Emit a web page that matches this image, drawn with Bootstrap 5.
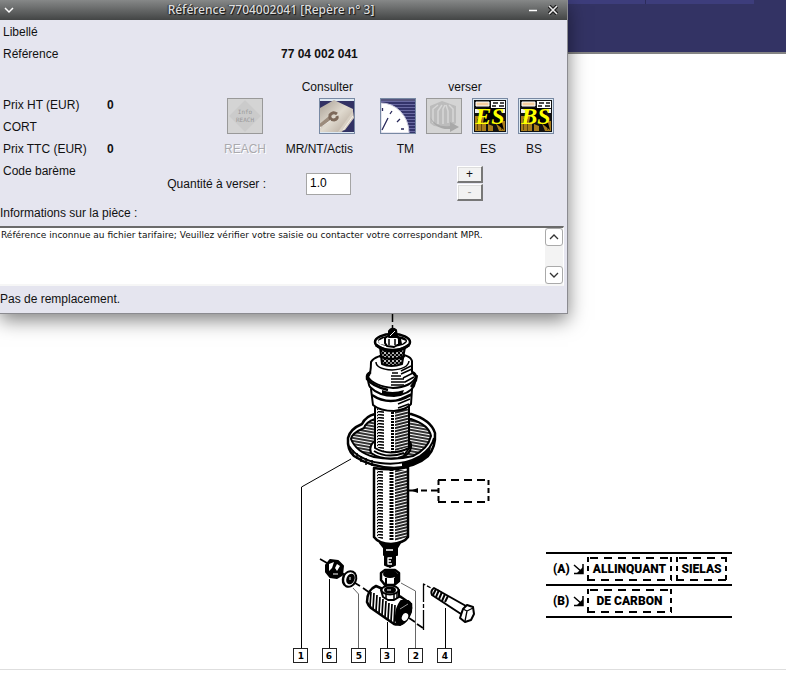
<!DOCTYPE html>
<html lang="fr">
<head>
<meta charset="utf-8">
<meta name="viewport" content="width=device-width, initial-scale=1">
<title>Référence 7704002041</title>
<link href="https://cdn.jsdelivr.net/npm/bootstrap@5.3.0/dist/css/bootstrap.min.css" rel="stylesheet">
<style>
body{font:12px/22px "Liberation Sans",Arial,sans-serif;color:#111;background:#fff}
.topbar{height:54px;background:#333364;border-bottom:2px solid #848484}
.tabstrip{height:4px;width:754px;max-width:100%;background:#3d3d7c}
.tabstrip span{width:646px;border-right:1px solid #2c2c5c}
.dialogwin{position:absolute;top:0;left:0;width:568px;max-width:100%;background:#e5e5ef;border-right:1px solid #8b8b90;border-bottom:1px solid #8b8b90;box-shadow:0 6px 18px rgba(0,0,0,.5)}
.titlebar{height:20px;background:linear-gradient(#868888,#434545);color:#ddd;font:500 12px/20px "Noto Sans",sans-serif;text-shadow:1px 1px 1px #111,-1px 0 1px #333;padding:0 8px 0 3px}
.titlebar button{width:12px;height:20px;border:0;background:none;padding:0;display:flex;align-items:center;justify-content:center}
.titlebar button svg{display:block}
.fields{padding:1px 0 0 3px}
.fields .lbl{width:104px}
.refvalue{margin-left:174px}
.prices{width:160px;padding:29px 0 0 3px}
.prices dt,.prices dd{font:inherit;margin:0}
.prices dd{font-weight:700}
.prices dt{width:104px}
.actions{display:grid;grid-template-columns:106px 89px 61px 46px 46px 46px;grid-template-rows:33px 36px 26px 41px;justify-items:end;padding-bottom:1px}
.actions>label,.actions>.head{align-self:end}
.actions .mid{grid-column:4 / span 2;justify-self:center;padding-left:6px}
.icobtn{width:36px;height:36px;padding:0;border:1px solid #7889a3;background:#dce8f2;border-radius:0}
.icobtn svg{display:block;width:34px;height:34px}
.icobtn:disabled{border-color:#999;background:#d4d4d4}
.infobtn{margin-right:3px}
.dim{color:#aaaaae;text-shadow:1px 1px 0 #fff}
.tight{padding-right:2px}
.wide{padding-right:12px}
.qty{width:45px;height:22px;border:1px solid #a5a5a5;background:#fff;padding:0 3px 2px;font:inherit;margin-right:4px}
.qtyrow{margin-top:6px}
.stepbtn{width:26px;height:17px;font:12px/12px "Liberation Sans",sans-serif;padding:0;border:1px solid;border-color:#fff #777 #777 #fff;border-right-width:2px;border-bottom-width:2px;background:#f2f2f2;box-shadow:inset 1px 1px 0 #ddd;color:#111}
.stepbtn:disabled{color:#999}
.actions .steps{gap:1px;padding-left:16px}
.infolabel{padding-bottom:2px}
.infobox{height:60px;margin-right:3px;background:#fff;border-top:2px solid #6b6b6b;border-bottom:2px solid #f6f6f6;border-right:1px solid #fff}
.infobox textarea{resize:none;border:0;outline:0;padding:0 1px;overflow:hidden;font:9px/14px "DejaVu Sans",sans-serif;color:#111}
.scrollcol{width:18px;background:#f3f3f3}
.scrollcol button{height:18px;padding:0;border:1px solid #aaa;border-radius:3px;background:#fff;display:flex;align-items:center;justify-content:center}
.replace{padding:2px 0 3px}
.plan{border-bottom:1px solid #dedede}
.drawing{width:500px;height:615px;flex:none}
.legend{margin:0 54px 51px 46px;width:186px;font:900 12px/18px Roboto,sans-serif;color:#000}
.legend td{height:32px;padding:0;border-top:2px solid #000}
.legend tr:last-child td{border-bottom:2px solid #000}
.legend td:first-child{width:27px;padding-left:7px}
.legend td:nth-child(2){width:14px}
.legend svg{display:block}
.brand{display:inline-flex;align-items:center;justify-content:center;height:24px;vertical-align:middle;background:
 repeating-linear-gradient(90deg,#000 0 8px,transparent 8px 14px) 3px 0/100% 2px no-repeat,
 repeating-linear-gradient(90deg,#000 0 8px,transparent 8px 14px) 0 100%/100% 2px no-repeat,
 repeating-linear-gradient(#000 0 5px,transparent 5px 9px) 0 0/2px 100% no-repeat,
 repeating-linear-gradient(#000 0 5px,transparent 5px 9px) 100% 0/2px 100% no-repeat}
.brand.big{width:85px}
.brand.slim{width:51px}
</style>
</head>
<body>
<header class="topbar"><div class="tabstrip d-flex"><span></span></div></header>

<main class="plan d-flex align-items-end">
<svg class="drawing" viewBox="0 54 500 615" role="img" aria-label="Vue éclatée de l'amortisseur">
 <defs>
  <pattern id="hh" width="9" height="3" patternUnits="userSpaceOnUse"><path d="M0 .5L9 1.5" stroke="#000" stroke-width="1.6"/></pattern>
  <pattern id="hd" width="4" height="3" patternUnits="userSpaceOnUse" patternTransform="rotate(-14)"><path d="M0 1H4" stroke="#000" stroke-width="1.700"/></pattern>
  <pattern id="hp" width="4" height="3" patternUnits="userSpaceOnUse" patternTransform="rotate(10)"><path d="M0 1H4" stroke="#000" stroke-width="1.600"/></pattern>
  <pattern id="kn" width="4" height="4" patternUnits="userSpaceOnUse"><rect width="4" height="4"/><path d="M0 1H2M2 3H4M1 0V2" stroke="#fff" stroke-width="1"/></pattern>
 </defs>
 <g fill="#fff" stroke="#000" stroke-width="2" stroke-linejoin="round">
  <path d="M392.500 314V322M392.500 325V330" stroke-width="1.500"/>
  <!-- spring seat -->
  <path d="M375 414Q366 416 362 424Q350 429 348 438Q347 450 354 456Q370 467 394 468Q416 467 428 456Q436 447 435 433Q431 420 411 414Z" stroke-width="2.500"/>
  <path d="M375 419Q366 422 364 428Q352 433 351 439Q356 452 374 457Q394 461 413 456Q428 449 431 436Q429 425 411 419Z" fill="url(#hp)" stroke-width="2"/>
  <path d="M349 446Q358 460 380 463Q403 466 420 456Q432 448 434 438" fill="none" stroke-width="2"/>
  <path d="M402 463Q418 460 431 447L429 456Q418 465 402 467Z" fill="#000" stroke="none"/>
  <path d="M353 450V456M357 453V459M361 456V462M366 458V465M372 460V466" fill="none" stroke-width="1.500"/>
  <path d="M376 440Q368 446 371 453Q381 460 398 458Q412 455 411 444L407 437Z"/>
  <path d="M374 451Q387 459 404 453M404 455L411 446" fill="none" stroke-width="2"/>
  <!-- upper tube -->
  <path d="M375 404V448Q390 457 409 448V404Z"/>
  <path d="M377 407H384V451L377 447Z" fill="url(#hh)" stroke="none"/>
  <path d="M395 409H408V447L395 451Z" fill="url(#hd)" stroke="none"/>
  <path d="M392.500 409V452" stroke-width="3" stroke-dasharray="2 1" fill="none"/>
  <path d="M371 389L373 405Q380 411 394 411Q406 410 411 404L412 389Z"/>
  <path d="M372 395Q390 407 411 395" fill="none" stroke-width="2.500"/>
  <path d="M398 404L410 399M398 408L409 404M398 400L411 394" fill="none" stroke-width="1.500"/>
  <path d="M368 377Q368 384 370 387Q379 396 394 396Q410 394 414 386L417 376Z"/>
  <path d="M382 390Q392 394 404 390L402 395Q390 397 382 394Z" fill="#000" stroke="none"/>
  <path d="M371 362Q371 374 368 377Q374 386 393 388Q411 387 416 377L412 372V361Q410 354 393 354Q375 355 371 362Z"/>
  <path d="M371 372Q366 374 367 379Q372 386 388 390" fill="none" stroke-width="2.500"/>
  <path d="M412 372Q417 374 416 380L411 387" fill="none" stroke-width="2.500"/>
  <path d="M376 362Q376 369 392 370Q408 369 409 361" fill="none" stroke-width="1.500"/>
  <path d="M392 373H398M391 376H401M391 379H404M391 382H406M391 385H404M401 371L411 366M401 374L412 369M403 378L413 373M405 382L414 377" fill="none" stroke-width="1.500"/>
  <!-- bump stop and cup -->
  <path d="M380 347L382 364Q391 368 402 364L405 347Z" fill="url(#kn)"/>
  <path d="M379 356Q391 362 405 356" fill="none" stroke-width="2"/>
  <ellipse cx="392.500" cy="342" rx="17.500" ry="8" stroke-width="2.500"/>
  <ellipse cx="392.500" cy="341" rx="14.500" ry="5.500" fill="#000" stroke="none"/>
  <path d="M376 345Q392 357 409 345" fill="none" stroke-width="3"/>
  <path d="M378 341L384 338L385 345L380 344ZM401 339L406 341L402 344Z" fill="#fff" stroke="none"/>
  <path d="M385 338L388 336H397L399 339V344L394 347L387 346L385 343Z"/>
  <path d="M389 339V345M395 339V345" stroke-width="1.500"/>
  <path d="M389 337V331Q392 327 396 330L397 337Z" fill="#000"/>
  <path d="M390 336L395 331" stroke="#fff" stroke-width="1"/>
  <!-- lower tube -->
  <path d="M374 468V537Q379 544 391 544Q404 543 408 537V467Q391 471 374 468Z" stroke-width="2.500"/>
  <path d="M377 470H383V540L377 537Z" fill="url(#hh)" stroke="none"/>
  <path d="M395 470H407V537L395 541Z" fill="url(#hd)" stroke="none"/>
  <path d="M391.500 469V541" fill="none" stroke-width="4" stroke-dasharray="2 1"/>
  <path d="M380 543L384 548V555H385V565Q390 568 395 565V555H397V548L400 543Q390 546 380 543Z" fill="#000"/>
  <path d="M386 550H393M392 558H388V564H392M388 561H391" fill="none" stroke="#fff" stroke-width="1.300"/>
  <path d="M390 566V571" stroke-width="1.500" stroke-dasharray="2 1"/>
  <!-- nut 2 -->
  <path d="M381 573L385 570H395L399 573V581L394 585H385L381 580Z" stroke-width="2.500"/>
  <ellipse cx="390" cy="574" rx="6" ry="3" fill="#000"/>
  <path d="M386 578V584M395 578V583" stroke-width="2"/>
  <path d="M396 574L399 575V581L395 584Z" fill="#000"/>
  <!-- bush 3 -->
  <path d="M376 586Q367 590 367 602Q368 605 371 608L394 624Q401 626 406 620Q412 611 411 604L401 597Z" stroke-width="2.500"/>
  <path d="M371 592L370 606M374 593L373 609M377 595L376 611M380 597L379 613M383 599L382 615M386 601L385 617M389 603L388 619M392 604L391 621M395 605L394 623" stroke-width="1.700"/>
  <path d="M401 601Q396 608 396 616Q395 624 400 625Q407 623 411 612Q412 603 408 601Z" fill="#000"/>
  <ellipse cx="405" cy="617" rx="3" ry="4" transform="rotate(25 405 617)" stroke="none"/>
  <path d="M400 609L408 604" stroke="#999" stroke-width="1"/>
  <path d="M381 590L383 597L388 600H394L399 597V590Z"/>
  <ellipse cx="390" cy="590" rx="8.500" ry="4.500"/>
  <ellipse cx="390" cy="590" rx="5" ry="2.500" fill="#000"/>
  <path d="M386 594V599M394 594V599M397 593V598" fill="none" stroke-width="1.500"/>
  <path d="M387 590H391" stroke="#fff" stroke-width="1"/>
  <!-- nut 6 -->
  <path d="M326 565L330 560L338 561L343 566L342 575L337 578L330 577L326 572Z" fill="#000"/>
  <path d="M329 564L334 562L332 568L329 571ZM337 564L340 566L337 571L335 568Z" stroke="none"/>
  <path d="M333 574L338 574" stroke="#fff" stroke-width="1"/>
  <!-- washer 5 -->
  <ellipse cx="349.500" cy="579" rx="6.500" ry="8" transform="rotate(25 349.500 579)"/>
  <ellipse cx="350.500" cy="579" rx="3" ry="4.500" fill="#000" transform="rotate(25 350.500 579)"/>
  <path d="M344 575Q342 582 345 585" fill="none" stroke-width="2"/>
  <path d="M350 577V580" stroke="#fff" stroke-width="1"/>
  <path d="M320 559L327 563M342 573L345 575M355 583L360 586M363 588L370 593" stroke-width="1.700"/>
  <path d="M409 618L415 622M417 624L423 628" stroke-width="1.700"/>
  <path d="M423.500 630V584L431 588" fill="none" stroke-width="1.300" stroke-dasharray="20 2 4 2"/>
  <!-- bolt 4 -->
  <path d="M434 588Q430 591 432 595L461 614L466 606Z"/>
  <path d="M436 589L433 595M439 590L436 597M442 592L439 599M445 594L442 601M448 596L445 602" stroke-width="2"/>
  <path d="M463 609L467 605L473 607L474 614L471 620L465 622L460 618Z"/>
  <path d="M463 609L467 611L465 621M467 611L473 608" fill="none" stroke-width="1.300"/>
 </g>
 <g fill="none" stroke="#000">
  <path d="M301.500 648V487L351 459M329.500 648V579M387.500 648V622M445.500 648V608" stroke-width="1"/>
  <path d="M358.500 648V594L353 588M415.500 648V591L401 583" stroke="#666" stroke-width="1"/>
  <path d="M409 490.500H418M421 490.500H427M431 490.500H438" stroke-width="2"/>
  <path d="M411 490.500L418 488V493Z" fill="#000" stroke="none"/>
  <path d="M438 480H489M438 502H489" stroke-width="2" stroke-dasharray="8 5"/>
  <path d="M438.500 480V502M488.500 480V502" stroke-width="2" stroke-dasharray="5 3"/>
 </g>
 <g fill="#fff" stroke="#222" stroke-width="1">
  <rect x="293.500" y="648.500" width="14" height="14"/><rect x="322.500" y="648.500" width="14" height="14"/><rect x="351.500" y="648.500" width="14" height="14"/><rect x="380.500" y="648.500" width="14" height="14"/><rect x="408.500" y="648.500" width="14" height="14"/><rect x="437.500" y="648.500" width="14" height="14"/>
 </g>
 <g font-family="DejaVu Sans, sans-serif" font-weight="700" font-size="9" text-anchor="middle">
  <text x="301" y="659">1</text><text x="329" y="659">6</text><text x="359" y="659">5</text><text x="387" y="659">3</text><text x="416" y="659">2</text><text x="445" y="659">4</text>
 </g>
</svg>

<table class="legend">
 <tr><td>(A)</td><td><svg width="12" height="12" viewBox="0 0 12 12"><path d="M1 2L9 9M10 1V10.500H1" fill="none" stroke="#000" stroke-width="1.500"/><path d="M10 4V11H3Z"/></svg></td><td><div class="d-flex gap-1"><span class="brand big">ALLINQUANT</span><span class="brand slim">SIELAS</span></div></td></tr>
 <tr><td>(B)</td><td><svg width="12" height="12" viewBox="0 0 12 12"><path d="M1 2L9 9M10 1V10.500H1" fill="none" stroke="#000" stroke-width="1.500"/><path d="M10 4V11H3Z"/></svg></td><td><div class="d-flex"><span class="brand big">DE CARBON</span></div></td></tr>
</table>
</main>

<section class="dialogwin" role="dialog" aria-labelledby="wintitle">
 <div class="titlebar d-flex align-items-center">
  <button aria-label="Menu"><svg width="10" height="8"><path d="M1 2L5 6L9 2" fill="none" stroke="#fff" stroke-width="1.500"/></svg></button>
  <div id="wintitle" class="flex-grow-1 text-center">Référence 7704002041 [Repère n° 3]</div>
  <div class="d-flex gap-2">
   <button aria-label="Réduire"><svg width="10" height="10"><path d="M1 5.500H9" stroke="#fff" stroke-width="1.500"/></svg></button>
   <button aria-label="Fermer"><svg width="10" height="10"><path d="M1 1L9 9M9 1L1 9" stroke="#222" stroke-width="4"/><path d="M1 1L9 9M9 1L1 9" stroke="#eee" stroke-width="1.500"/></svg></button>
  </div>
 </div>
 <div class="fields">
  <div>Libellé</div>
  <div class="d-flex"><span class="lbl">Référence</span><strong class="refvalue">77 04 002 041</strong></div>
 </div>
 <div class="d-flex">
  <dl class="prices mb-0">
   <div class="d-flex"><dt>Prix HT (EUR)</dt><dd>0</dd></div>
   <div class="d-flex"><dt>CORT</dt></div>
   <div class="d-flex"><dt>Prix TTC (EUR)</dt><dd>0</dd></div>
   <div class="d-flex"><dt>Code barème</dt></div>
  </dl>
  <div class="actions">
   <span></span><span class="head tight">Consulter</span><span></span><span class="head mid">verser</span><span></span>
   <button id="b1" class="icobtn infobtn" disabled><svg viewBox="0 0 34 34"><path d="M17 1L33 17L17 33L1 17Z" fill="#cbcbcb"/><g font-family="DejaVu Sans Mono, monospace" font-size="6" fill="#999" text-anchor="middle"><text x="17" y="15">Info</text><text x="17" y="23">REACH</text></g></svg></button>
   <button id="b2" class="icobtn"><svg viewBox="0 0 34 34"><defs><linearGradient id="bk" x2="1" y2="1"><stop stop-color="#a89f94"/><stop offset=".5" stop-color="#e0dacf"/><stop offset="1" stop-color="#ad9f91"/></linearGradient></defs><path d="M0 2H34V33H0Z" fill="#323264"/><path d="M0 9L14 1L33 10V16L22 33H0Z" fill="url(#bk)"/><path d="M33 12L34 19L25 31L18 33Z" fill="#d8d0c4"/><path d="M33 17L23 31" stroke="#f4f0ea" stroke-width="1"/><path d="M0 27L11 18" stroke="#9c8c7c" stroke-width="4"/><path d="M17 15Q13 12 10 16Q9 21 14 21Q18 20 17 17" fill="none" stroke="#7d695a" stroke-width="3"/><path d="M0 29L11 21" stroke="#fff" opacity=".6"/></svg></button>
   <button id="b3" class="icobtn"><svg viewBox="0 0 34 34"><path d="M0 0H34V34H0Z" fill="#34346b"/><path d="M0 2.500H34M0 5.500H34M0 8.500H34M0 11.500H34M0 14.500H34M0 17.500H34M0 20.500H34M0 23.500H34M0 26.500H34M0 29.500H34M0 32.500H34" stroke="#6a6aa2"/><path d="M0 4Q11 4 19 12Q28 21 28 34H0Z" fill="#fff" stroke="#c8c8dc"/><path d="M1 31L7 19M1.500 9V12M9 15L11 12M16 23L19 20M20 30H23" stroke="#28285a" stroke-width="1.300"/><path d="M0 1H34" stroke="#55557d" stroke-width="2"/></svg></button>
   <button id="b4" class="icobtn" disabled aria-label="Verser"><svg viewBox="0 0 34 34"><path d="M3 7L15 2L29 7V24L24 29L7 27L3 24Z" fill="#bcbcbc"/><path d="M6 24V10L11 6M11 25V12L15 6M16 25V10L18 6M21 24V12L19 6M26 23V10L22 6" fill="none" stroke="#d6d6d6" stroke-width="1.500"/><path d="M3 18Q9 29 23 27V23L32 28L23 33V30Q8 31 3 18Z" fill="#a9a9a9"/></svg></button>
   <button id="b5" class="icobtn"><svg viewBox="0 0 34 34"><g id="part"><path d="M1 1H33V33H1Z" fill="#111"/><path d="M3 3H16V7H3Z" fill="#f7cfa0" stroke="#fff"/><path d="M18 2H32V9H18Z" fill="#fff"/><path d="M20 4H25M27 4H31M19 7H23M26 7H31" stroke="#111" stroke-width="1.500"/><path d="M2 10H10L7 14H2ZM27 10H32V14H29Z" fill="#eee"/><path d="M2 17H13V32H2ZM15 25L20 27V32H15ZM22 22H32V32H26Z" fill="#a87c1c"/><path d="M4.500 20V31M8.500 20V32M28.500 22V31" stroke="#5f4710"/><path d="M13 9H25L31 31L26 27L18 20L10 24Z" fill="#000"/></g><text x="17" y="25" font-family="Liberation Serif, serif" font-size="24" font-style="italic" font-weight="700" fill="#ff0" text-anchor="middle">ES</text></svg></button>
   <button id="b6" class="icobtn"><svg viewBox="0 0 34 34"><use href="#part"/><text x="17" y="25" font-family="Liberation Serif, serif" font-size="24" font-style="italic" font-weight="700" fill="#ff0" text-anchor="middle">BS</text></svg></button>
   <label for="b1" class="dim">REACH</label><label for="b2" class="tight">MR/NT/Actis</label><label for="b3" class="tight">TM</label><span></span><label for="b5" class="wide">ES</label><label for="b6" class="wide">BS</label>
   <label for="qty" class="align-self-center qtyrow">Quantité à verser :</label>
   <input id="qty" class="qty align-self-center qtyrow" type="text" value="1.0">
   <span></span>
   <div class="mid steps d-flex flex-column align-self-end"><button class="stepbtn" aria-label="Plus">+</button><button class="stepbtn" disabled aria-label="Moins">-</button></div>
  </div>
 </div>
 <label for="info" class="infolabel d-block">Informations sur la pièce :</label>
 <div class="infobox d-flex">
  <textarea id="info" class="flex-grow-1" readonly>Référence inconnue au fichier tarifaire; Veuillez vérifier votre saisie ou contacter votre correspondant MPR.</textarea>
  <div class="scrollcol d-flex flex-column justify-content-between">
   <button aria-label="Défiler vers le haut"><svg width="10" height="8"><path d="M1 6L5 2L9 6" fill="none" stroke="#333" stroke-width="1.300"/></svg></button>
   <button aria-label="Défiler vers le bas"><svg width="10" height="8"><path d="M1 2L5 6L9 2" fill="none" stroke="#333" stroke-width="1.300"/></svg></button>
  </div>
 </div>
 <div class="replace">Pas de remplacement.</div>
</section>
<script src="https://cdn.jsdelivr.net/npm/bootstrap@5.3.0/dist/js/bootstrap.bundle.min.js"></script>
</body>
</html>
